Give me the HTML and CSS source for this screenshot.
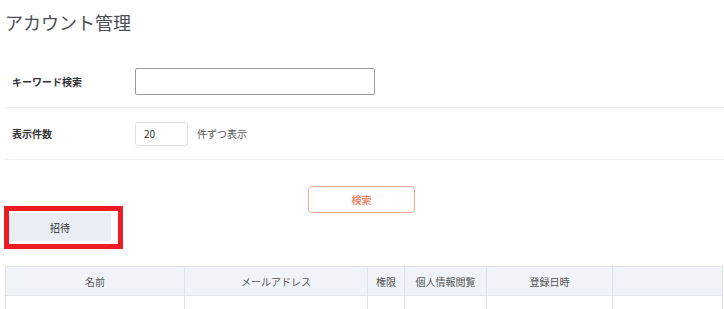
FILE: index.html
```html
<!DOCTYPE html>
<html lang="ja">
<head>
<meta charset="utf-8">
<link rel="stylesheet" href="styles.css">
</head>
<body>
<div class="page">
  <h1 class="title">アカウント管理</h1>
  <div class="form">
    <div class="row row-first">
      <div class="label">キーワード検索</div>
      <input class="kw" type="text">
    </div>
    <div class="row">
      <div class="label">表示件数</div>
      <input class="num" type="text" value="20">
      <span class="unit">件ずつ表示</span>
    </div>
  </div>
  <div class="search-wrap"><button class="search">検索</button></div>
  <div class="invite-wrap"><div class="mark"><button class="invite">招待</button></div></div>
  <table class="list">
    <thead>
      <tr>
        <th class="c1">名前</th>
        <th class="c2">メールアドレス</th>
        <th class="c3">権限</th>
        <th class="c4">個人情報閲覧</th>
        <th class="c5">登録日時</th>
        <th class="c6"></th>
      </tr>
    </thead>
    <tbody>
      <tr><td></td><td></td><td></td><td></td><td></td><td></td></tr>
    </tbody>
  </table>
</div>
</body>
</html>
```
FILE: styles.css
```css
html, body { margin: 0; padding: 0; background: #fff; }
body { font-family: "Noto Sans CJK JP", "Noto Sans", sans-serif; color: #333; }
.page { padding-left: 5px; padding-right: 0; }
.title { margin: 0; padding-top: 8px; font-size: 18px; line-height: 28px; font-weight: 400; color: #4a4f55; letter-spacing: 0; }
.form { margin-top: 20px; }
.row { display: flex; align-items: center; height: 51px; border-bottom: 1px solid #edf1f7; }
.label { width: 123px; padding-left: 7px; font-size: 10px; font-weight: 700; color: #333; }
.kw { box-sizing: border-box; width: 240px; height: 27px; border: 1px solid #9a9a9a; border-radius: 2px; margin: 0; padding: 0 6px; font-size: 11px; }
.num { box-sizing: border-box; width: 53px; height: 24px; border: 1px solid #dcdfe4; border-radius: 3px; margin: 0; padding: 0 8px; font-size: 10px; color: #333; font-family: "Noto Sans CJK JP", sans-serif; }
.unit { margin-left: 9px; font-size: 10px; color: #555; }
.search-wrap { display: flex; justify-content: center; margin-top: 26px; padding-right: 6px; }
.search { box-sizing: border-box; width: 107px; height: 27px; background: #fff; border: 1px solid #f9ab98; border-radius: 4px; color: #f2876b; font-weight: 700; font-size: 10px; font-family: "Noto Sans CJK JP", sans-serif; padding: 0; }
.invite-wrap { margin-top: -7px; }
.mark { display: inline-block; margin-left: -1px; border: 5px solid #ed1c24; padding: 2px 7px 3px 0; }
.invite { display: block; box-sizing: border-box; width: 102px; height: 28px; background: #e9eef5; border: none; border-radius: 3px; font-size: 10px; color: #333; font-family: "Noto Sans CJK JP", sans-serif; padding: 0; margin-left: 0; }
.list { margin-top: 17px; width: 718px; border-collapse: collapse; table-layout: fixed; }
.list th { height: 28px; background: #f0f3f8; border: 1px solid #dde4ec; font-size: 10px; font-weight: 400; color: #555; padding: 0; }
.list td { height: 28px; border-left: 1px solid #dde4ec; border-right: 1px solid #dde4ec; }
.c1 { width: 178px; }
.c2 { width: 182px; }
.c3 { width: 36px; }
.c4 { width: 81px; }
.c5 { width: 125px; }
```
